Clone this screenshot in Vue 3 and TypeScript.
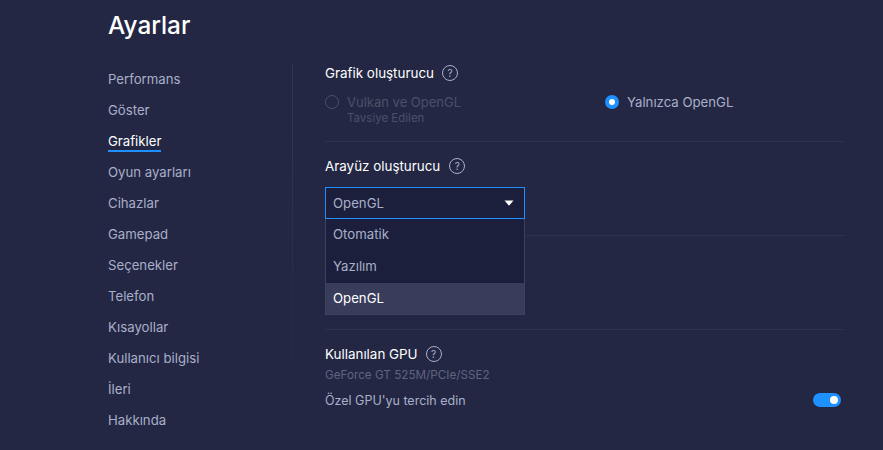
<script setup lang="ts">
const navItems: string[] = ['Performans', 'Göster', 'Grafikler', 'Oyun ayarları', 'Cihazlar', 'Gamepad', 'Seçenekler', 'Telefon', 'Kısayollar', 'Kullanıcı bilgisi', 'İleri', 'Hakkında']
const activeItem = 'Grafikler'
const options: string[] = ['Otomatik', 'Yazılım', 'OpenGL']
const selected = 'OpenGL'
</script>

<template>
  <div class="page">
    <h1 class="title">Ayarlar</h1>
    <div class="body">
      <nav class="nav">
        <div v-for="item in navItems" :key="item" class="nav-row">
          <span class="nav-item" :class="{ active: item === activeItem }">{{ item }}</span>
        </div>
      </nav>
      <main class="content">
        <section class="section first">
          <div class="heading">
            <span>Grafik oluşturucu</span>
            <span class="help">?</span>
          </div>
          <div class="radios">
            <div class="radio disabled">
              <span class="dot"></span>
              <div>
                <div class="radio-label">Vulkan ve OpenGL</div>
                <div class="radio-sub">Tavsiye Edilen</div>
              </div>
            </div>
            <div class="radio">
              <span class="dot on"></span>
              <div class="radio-label">Yalnızca OpenGL</div>
            </div>
          </div>
        </section>
        <section class="section second">
          <div class="heading wide">
            <span>Arayüz oluşturucu</span>
            <span class="help">?</span>
          </div>
          <div class="select-wrap">
            <div class="select">
              <span>OpenGL</span>
              <svg class="caret" width="10" height="6" viewBox="0 0 10 6"><path d="M0.5 0.5h9L5 5.8z" fill="#fff" /></svg>
            </div>
            <ul class="menu">
              <li v-for="o in options" :key="o" class="option" :class="{ current: o === selected }">{{ o }}</li>
            </ul>
          </div>
        </section>
        <section class="section hidden-rule"></section>
        <section class="section gpu">
          <div class="heading">
            <span>Kullanılan GPU</span>
            <span class="help">?</span>
          </div>
          <div class="gpu-name">GeForce GT 525M/PCIe/SSE2</div>
          <div class="pref">
            <span>Özel GPU'yu tercih edin</span>
            <span class="toggle"><span class="knob"></span></span>
          </div>
        </section>
      </main>
    </div>
  </div>
</template>

<style>
html, body { margin: 0; background: #232743; }
</style>

<style scoped>
.page {
  box-sizing: border-box;
  width: 883px;
  height: 450px;
  overflow: hidden;
  padding-left: 108px;
  background: #232743;
  font-family: Inter, "Liberation Sans", sans-serif;
  font-size: 13.2px;
  color: #a9afc9;
}
.title {
  margin: 0;
  height: 65px;
  padding-top: 10px;
  box-sizing: border-box;
  font-size: 24.3px;
  line-height: 30px;
  font-weight: 500;
  color: #fff;
}
.body { display: flex; }
.nav {
  box-sizing: content-box;
  width: 184px;
  height: 385px;
  flex: none;
  padding-right: 1px;
  background: linear-gradient(#33385a, #272b48 70%, #232743) right top / 1px 345px no-repeat;
}
.nav-row { height: 31px; line-height: 29px; }
.nav-item { display: inline-block; line-height: 18px; border-bottom: 2px solid transparent; }
.nav-item.active { color: #fff; border-bottom-color: #1e90ff; }
.content { width: 520px; margin-left: 32px; }
.section { box-sizing: border-box; border-bottom: 1px solid #2d3150; }
.first { height: 78px; margin-top: -1px; }
.heading {
  display: flex;
  align-items: center;
  gap: 8px;
  height: 18px;
  font-size: 13.4px;
  color: #fff;
}
.heading.wide { gap: 9px; }
.help {
  box-sizing: border-box;
  width: 16px;
  height: 16px;
  border: 1px solid #a9afc9;
  border-radius: 50%;
  font-size: 10px;
  line-height: 14px;
  text-align: center;
  color: #a9afc9;
}
.radios { display: flex; margin-top: 11px; }
.radio { display: flex; width: 280px; gap: 8px; }
.radio:last-child { width: 240px; }
.dot {
  box-sizing: border-box;
  flex: none;
  width: 14px;
  height: 14px;
  margin-top: 2px;
  border: 1px solid #4b5068;
  border-radius: 50%;
}
.dot.on { background: #fff; border: 4px solid #1e90ff; }
.radio-label { line-height: 18px; }
.radio-sub { font-size: 11.5px; line-height: 13px; margin-top: 1px; color: #4b5068; }
.disabled .radio-label { color: #4b5068; font-size: 13px; }
.second { height: 94px; padding-top: 15px; }
.select-wrap { position: relative; margin-top: 12px; width: 200px; }
.select {
  box-sizing: border-box;
  height: 32px;
  padding: 0 10px 0 7px;
  display: flex;
  align-items: center;
  justify-content: space-between;
  border: 1px solid #1e90ff;
  background: #1b1f3b;
}
.caret { display: block; }
.menu {
  position: absolute;
  top: 32px;
  left: 0;
  right: 0;
  margin: 0;
  padding: 0;
  list-style: none;
  background: #1b1f3b;
  border: 1px solid #3c4160;
  border-top: 0;
}
.option { height: 32px; line-height: 31px; padding-left: 7px; }
.option.current { height: 31px; background: #393c5b; color: #fff; }
.hidden-rule { height: 94px; }
.gpu { border-bottom: 0; padding-top: 15px; }
.gpu-name { margin-top: 4px; font-size: 11.7px; line-height: 16px; color: #5f6480; }
.pref {
  display: flex;
  align-items: center;
  justify-content: space-between;
  margin-top: 8px;
  height: 18px;
  padding-right: 4px;
  font-size: 12.5px;
}
.toggle {
  box-sizing: border-box;
  display: flex;
  justify-content: flex-end;
  align-items: center;
  width: 28px;
  height: 14px;
  padding-right: 3px;
  border-radius: 7px;
  background: #1e90ff;
}
.knob { width: 8px; height: 8px; border-radius: 50%; background: #fff; }
</style>
